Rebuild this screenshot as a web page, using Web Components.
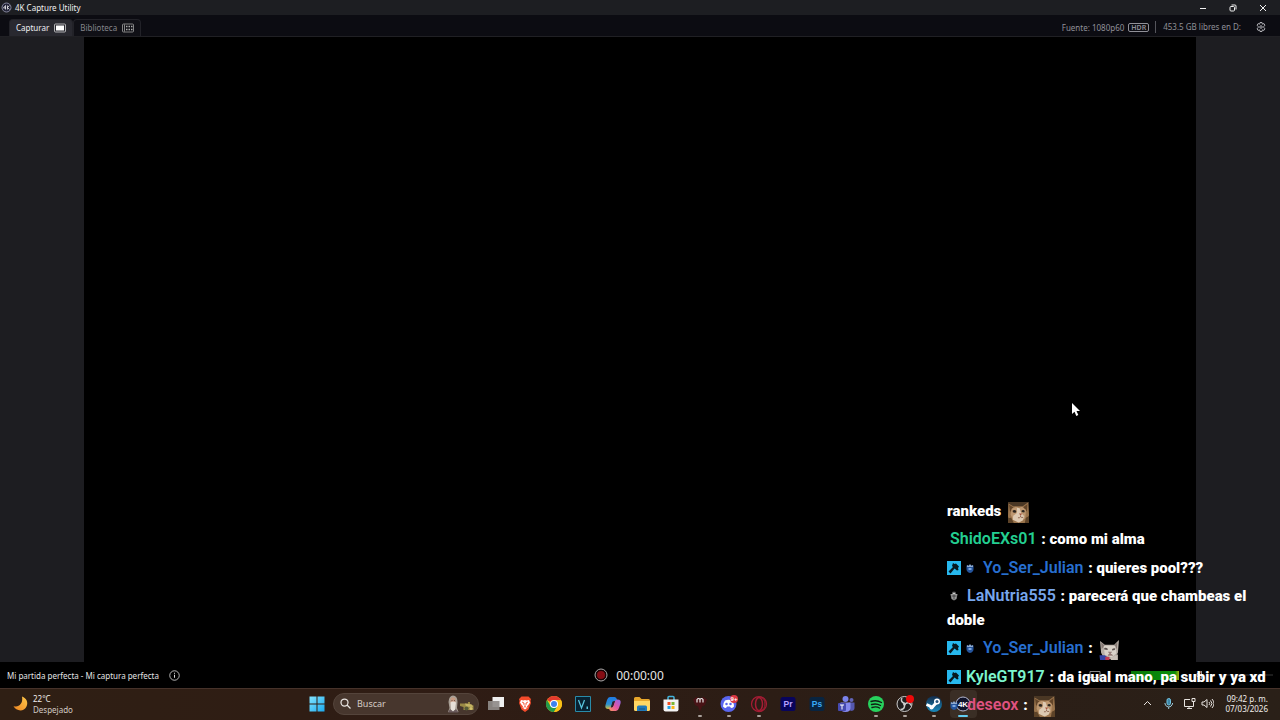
<!DOCTYPE html>
<html lang="es">
<head>
<meta charset="utf-8">
<meta name="viewport" content="width=device-width, initial-scale=1">
<title>4K Capture Utility</title>
<style>
    html, body {
        height: 100%;
        margin: 0;
        background: #000;
        overflow: hidden;
    }
    body {
        font-family: "Noto Sans", "Open Sans", sans-serif;
        font-size: 8px;
        color: #d8d8da;
    }
</style>
</head>
<body>
<capture-app></capture-app>

<script>
class CaptureTitlebar extends HTMLElement {
    constructor() {
        super();
        this.attachShadow({ mode: 'open' });
        this.shadowRoot.innerHTML = `
            <style>
                :host {
                    display: flex;
                    align-items: center;
                    height: 15px;
                    padding: 0 2px 0 1px;
                    background: #1d1e22;
                    color: #f0f0f0;
                }
                .logo { width: 11px; height: 11px; margin-right: 3px; }
                .name { flex: 1; line-height: 14px; }
                button {
                    display: grid;
                    place-items: center;
                    width: 30px;
                    height: 14px;
                    padding: 0;
                    border: 0;
                    background: none;
                    color: inherit;
                }
                button svg { width: 8px; height: 8px; fill: none; stroke: currentColor; }
            </style>
            <svg class="logo" viewBox="0 0 22 22" aria-hidden="true">
                <circle cx="11" cy="11" r="9" fill="#25263a" stroke="#85869c" stroke-width="2"/>
                <path d="M9 7v8M9 7l-4 5h5M13 7v8M17 7l-4 4 4 4" fill="none" stroke="#fff" stroke-width="1.400"/>
            </svg>
            <span class="name"><slot></slot></span>
            <button aria-label="Minimizar"><svg viewBox="0 0 8 8"><path d="M1 4.500h6"/></svg></button>
            <button aria-label="Restaurar"><svg viewBox="0 0 8 8"><rect x="1" y="2.500" width="4.500" height="4.500" rx="1"/><path d="M2.500 1h3.500q1 0 1 1v3.500"/></svg></button>
            <button aria-label="Cerrar"><svg viewBox="0 0 8 8"><path d="M1 1l6 6M7 1l-6 6"/></svg></button>
        `;
    }
}

class CaptureTabs extends HTMLElement {
    constructor() {
        super();
        this.attachShadow({ mode: 'open' });
        this.shadowRoot.innerHTML = `
            <style>
                :host {
                    display: flex;
                    align-items: flex-end;
                    justify-content: space-between;
                    height: 21px;
                    padding: 0 14px 0 9px;
                    border-bottom: 1px solid #202024;
                    background: #0c0c12;
                    color: #909098;
                }
                nav, .status { display: flex; align-items: center; }
                .status { height: 18px; }
                nav button {
                    display: flex;
                    align-items: center;
                    gap: 5px;
                    box-sizing: border-box;
                    height: 17px;
                    padding: 0 6px 1px;
                    border: 1px solid #222228;
                    border-bottom: 0;
                    border-radius: 4px 4px 0 0;
                    background: #101016;
                    color: #85858b;
                    font: inherit;
                }
                nav button.active { background: #292930; color: #f0f0f2; }
                nav svg { width: 12px; height: 10px; }
                .hdr {
                    margin-left: 4px;
                    padding: 0 2px;
                    border: 1px solid #909098;
                    border-radius: 2px;
                    font-size: 7px;
                    font-weight: 600;
                    line-height: 7px;
                }
                .disk { margin-left: 6px; padding-left: 7px; border-left: 1px solid #55555c; line-height: 12px; }
                .gear {
                    display: grid;
                    width: 10px;
                    height: 10px;
                    margin-left: 15px;
                    padding: 0;
                    border: 0;
                    background: none;
                    color: #c8c8cc;
                }
            </style>
            <nav>
                <button class="active">Capturar
                    <svg viewBox="0 0 24 20"><rect x="1" y="2" width="22" height="16" rx="2" fill="none" stroke="#ddd" stroke-width="1.500"/><rect x="4" y="5" width="16" height="10" fill="#fff"/></svg>
                </button>
                <button>Biblioteca
                    <svg viewBox="0 0 24 20" fill="none" stroke="#aaa" stroke-width="1.500"><rect x="1" y="2" width="22" height="16" rx="2"/><path d="M5 3v14"/><path d="M8 7h3M13 7h3M18 7h3M8 13h3M13 13h3M18 13h3" stroke-width="3"/></svg>
                </button>
            </nav>
            <div class="status">
                <span>Fuente: 1080p60</span>
                <span class="hdr">HDR</span>
                <span class="disk">453.5 GB libres en D:</span>
                <button class="gear" aria-label="Ajustes">
                    <svg viewBox="0 0 20 20" fill="none" stroke="currentColor" stroke-width="1.700"><path d="M8 1h4l.7 3.300 3.200-1.100 2 3.500L15.400 9v2l2.500 2.300-2 3.500-3.200-1.100L12 19H8l-.7-3.300-3.200 1.100-2-3.500L4.600 11V9L2.100 6.700l2-3.500 3.200 1.100z"/><circle cx="10" cy="10" r="2.500"/></svg>
                </button>
            </div>
        `;
    }
}

class VideoStage extends HTMLElement {
    constructor() {
        super();
        this.attachShadow({ mode: 'open' });
        this.shadowRoot.innerHTML = `
            <style>
                :host {
                    display: flex;
                    justify-content: center;
                    min-height: 0;
                    background: #1d1d21;
                }
                .video { height: 100%; aspect-ratio: 16 / 9; background: #000; }
            </style>
            <div class="video"></div>
        `;
    }
}

class RecordBar extends HTMLElement {
    constructor() {
        super();
        this.attachShadow({ mode: 'open' });
        this.shadowRoot.innerHTML = `
            <style>
                :host {
                    display: grid;
                    grid-template-columns: 1fr auto 1fr;
                    align-items: center;
                    height: 26px;
                    padding: 0 7px;
                    background: #000;
                    color: #e4e4e4;
                }
                div { display: flex; align-items: center; }
                button { display: grid; padding: 0; border: 0; background: none; }
                .title { gap: 10px; }
                .title svg { width: 11px; height: 11px; }
                .timer { gap: 8px; padding-right: 22px; font-size: 12px; }
                .timer svg { width: 14px; height: 14px; }
                .audio { justify-content: flex-end; gap: 14px; }
                .audio svg { width: 12px; height: 10px; }
                .audio .output { margin-right: 16px; }
                .level {
                    width: 48px;
                    height: 9px;
                    background: linear-gradient(90deg, #087808, #0a8f0a 92%, #a8b010);
                }
                input {
                    appearance: none;
                    width: 54px;
                    height: 2px;
                    margin: 0;
                    background: #1c1c1c;
                }
                input::-webkit-slider-thumb { appearance: none; width: 2px; height: 2px; background: #1c1c1c; }
            </style>
            <div class="title">
                <span>Mi partida perfecta - Mi captura perfecta</span>
                <button aria-label="Información"><svg viewBox="0 0 22 22" fill="none" stroke="#ddd" stroke-width="1.600"><circle cx="11" cy="11" r="9.500"/><path d="M11 9.500v6M11 5.500v2" stroke-width="2"/></svg></button>
            </div>
            <div class="timer">
                <button aria-label="Grabar"><svg viewBox="0 0 28 28"><circle cx="14" cy="14" r="12" fill="#180405" stroke="#aaa" stroke-width="2"/><circle cx="14" cy="14" r="8" fill="#850d14"/></svg></button>
                <span>00:00:00</span>
            </div>
            <div class="audio">
                <svg class="output" viewBox="0 0 24 20" fill="none" stroke="#888" stroke-width="2" aria-hidden="true"><path d="M2 3h20v12H2zM8 19h8"/></svg>
                <div class="level" role="meter" aria-label="Nivel de audio" aria-valuemin="0" aria-valuemax="100" aria-valuenow="100"></div>
                <svg viewBox="0 0 24 20" fill="none" stroke="#999" stroke-width="2" aria-hidden="true"><path d="M8 7h4l5-5v16l-5-5H8z"/></svg>
                <input type="range" value="50" aria-label="Volumen">
            </div>
        `;
    }
}

class TaskIcon extends HTMLElement {
    constructor() {
        super();
        this.attachShadow({ mode: 'open' });
        this.shadowRoot.innerHTML = `
            <style>
                :host { display: grid; justify-items: center; }
                button {
                    display: grid;
                    place-items: center;
                    position: relative;
                    width: 27px;
                    height: 28px;
                    padding: 0;
                    border: 0;
                    border-radius: 4px;
                    background: none;
                }
                :host([active]) button { background: #3a2e25; }
                :host([running]) button::after, :host([active]) button::after {
                    content: "";
                    position: absolute;
                    bottom: 1px;
                    width: 4px;
                    height: 2px;
                    border-radius: 1px;
                    background: #aaa19b;
                }
                :host([active]) button::after { width: 10px; background: #62cdf2; }
                ::slotted(svg) { display: block; width: 18px; height: 18px; }
            </style>
            <button><slot></slot></button>
        `;
    }

    connectedCallback() {
        this.shadowRoot.querySelector('button').setAttribute('aria-label', this.getAttribute('label'));
    }
}

class TaskBar extends HTMLElement {
    constructor() {
        super();
        this.attachShadow({ mode: 'open' });
        this.shadowRoot.innerHTML = `
            <style>
                :host {
                    display: grid;
                    grid-template-columns: 1fr auto 1fr;
                    align-items: center;
                    box-sizing: border-box;
                    height: 32px;
                    padding: 0 12px 2px;
                    border-top: 1px solid #46322a;
                    background: linear-gradient(90deg, #2f1f14, #2f1c14 35%, #2c1d15 60%, #2a2018);
                    color: #f0eeec;
                }
                .weather, .tray, .apps { display: flex; align-items: center; }
                .weather { gap: 4px; line-height: 11px; }
                .weather > svg { width: 17px; height: 17px; }
                .weather span { display: block; }
                .weather .sky { color: #d2cac4; }
                .search {
                    display: flex;
                    align-items: center;
                    box-sizing: border-box;
                    width: 146px;
                    height: 22px;
                    margin: 0 2px;
                    padding: 0 3px 0 6px;
                    border: 1px solid #54443b;
                    border-radius: 11px;
                    background: #47362d;
                }
                .search input {
                    flex: 1;
                    min-width: 0;
                    padding: 0 6px;
                    border: 0;
                    outline: 0;
                    background: none;
                    color: inherit;
                    font: inherit;
                    font-size: 9px;
                }
                .search input::placeholder { color: #d5ccc6; }
                .glass { width: 11px; height: 11px; }
                .figures { width: 28px; height: 18px; }
                .pins { display: grid; grid-template-columns: repeat(17, 1fr); width: 497px; }
                .start { width: 29px; }
                .tray { justify-content: flex-end; gap: 5px; }
                .tray button { display: grid; padding: 0; border: 0; background: none; }
                .tray svg { width: 13px; height: 13px; fill: none; stroke: #e8e4e0; stroke-width: 1; }
                .tray .mic { margin: 0 3px; }
                time { margin-left: 6px; text-align: right; line-height: 10px; }
                time span { display: block; }
            </style>
            <div class="weather">
                <svg viewBox="0 0 34 34" aria-hidden="true">
                    <defs><linearGradient id="moon" x1="1" y1="0" x2="0" y2="1"><stop offset="0" stop-color="#ffc94a"/><stop offset="1" stop-color="#ee8421"/></linearGradient></defs>
                    <path d="M20 3c9 3 13 12 9 20C24 34 8 33 3 22c9 4 20-4 17-19z" fill="url(#moon)"/>
                </svg>
                <div><span>22°C</span><span class="sky">Despejado</span></div>
            </div>
            <div class="apps">
                <task-icon class="start" label="Inicio"><svg viewBox="0 0 36 36"><defs><linearGradient id="win" x1="0" y1="0" x2="1" y2="1"><stop offset="0" stop-color="#83e4ff"/><stop offset="1" stop-color="#1ba9ed"/></linearGradient></defs><path d="M3 3h14v14H3zM19 3h14v14H19zM3 19h14v14H3zM19 19h14v14H19z" fill="url(#win)"/></svg></task-icon>
                <div class="search">
                    <svg class="glass" viewBox="0 0 22 22" fill="none" stroke="#e8e4e0" stroke-width="2.500" aria-hidden="true"><circle cx="9" cy="9" r="7"/><path d="M14 14l7 7"/></svg>
                    <input type="search" placeholder="Buscar" aria-label="Buscar">
                    <svg class="figures" viewBox="0 0 56 36" aria-hidden="true">
                        <path d="M3 14Q4 1 12 1q9 0 9 13l-1 12 3 8H2l3-8z" fill="#a9a096"/>
                        <path d="M7 7q5-5 10 0v11q-5 5-10 0z" fill="#c69a82"/><path d="M7 15q5-4 11 0l-2 14-4 4-4-4z" fill="#e6e0d8"/>
                        <path d="M9 11h2M14 11h2" stroke="#584037" stroke-width="1.500"/>
                        <path d="M2 35l4-7 6 5 6-5 5 7z" fill="#6a5a5c"/>
                        <path d="M26 17h16v-3h4v4l7 3v9H33v-6l-7-2z" fill="#9a8a45"/><path d="M36 17l13 2 3 5-14-1z" fill="#c5b565"/><circle cx="39" cy="27" r="4" fill="#565b38"/><circle cx="48" cy="27" r="3" fill="#d2c06c"/>
                    </svg>
                </div>
                <div class="pins">
                    <task-icon label="Vista de tareas"><svg viewBox="0 0 36 36"><path d="M11 4h23v20H11z" fill="#efefef"/><path d="M2 12h23v18H2z" fill="#8f8b89" opacity=".92"/></svg></task-icon>
                    <task-icon label="Brave"><svg viewBox="0 0 36 36"><path d="M11 3h14l5 5-1 4 1 4-5 13-7 5-7-5-5-13 1-4-1-4z" fill="#f34b2b"/><path d="M10 10l5 1 3-1 3 1 5-1 2 5-4 6-2 1 1 3-5 4-5-4 1-3-2-1-4-6z" fill="#fff"/><path d="M12 14l4 2-1 3M24 14l-4 2 1 3M18 17v6l-3 2M18 23l3 2" fill="none" stroke="#f34b2b" stroke-width="1.700"/></svg></task-icon>
                    <task-icon label="Chrome"><svg viewBox="0 0 36 36"><circle cx="18" cy="18" r="16" fill="#fbc116"/><path d="M18 18L4.100 10A16 16 0 0 1 31.900 10H18z" fill="#e33b2e"/><path d="M4.100 10A16 16 0 0 0 18 34l7-12-7-4-7 4z" fill="#229a4b"/><path d="M18 10h13.900A16 16 0 0 1 18 34l7-12z" fill="#fbc116"/><circle cx="18" cy="18" r="8" fill="#fff"/><circle cx="18" cy="18" r="6" fill="#3c82ed"/></svg></task-icon>
                    <task-icon label="Vegas"><svg viewBox="0 0 36 36"><path d="M3 3h30v30H3z" fill="#082232" stroke="#298ba9" stroke-width="2"/><path d="M9 10l6 16 6-16" fill="none" stroke="#5ac6df" stroke-width="2.500"/><path d="M25 23h3v5h-3z" fill="#5ac6df"/></svg></task-icon>
                    <task-icon label="Copilot"><svg viewBox="0 0 36 36"><defs><linearGradient id="cp1" x1="0" y1="0" x2="0" y2="1"><stop offset="0" stop-color="#1f7be5"/><stop offset=".6" stop-color="#2a8fd0"/><stop offset="1" stop-color="#d2c33b"/></linearGradient><linearGradient id="cp2" x1="1" y1="0" x2="0" y2="1"><stop offset="0" stop-color="#8a68ea"/><stop offset=".5" stop-color="#e255a7"/><stop offset="1" stop-color="#ff9a56"/></linearGradient></defs><path d="M12 4h9q4 0 5 5l1 3h-6q-3 0-4 4l-3 9q-1 3-5 3-8 0-6-8l3-10q2-6 6-6z" fill="url(#cp1)"/><path d="M24 32h-9q-4 0-5-5l-1-2h6q3 0 4-4l3-9q1-3 5-3 8 0 6 8l-3 9q-2 6-6 6z" fill="url(#cp2)"/><path d="M17 13h4l-4 11h-3z" fill="#2d2130"/></svg></task-icon>
                    <task-icon label="Explorador de archivos"><svg viewBox="0 0 36 36"><path d="M2 7q0-3 3-3h8l4 4h14q3 0 3 3v18H2z" fill="#e9a72b"/><path d="M2 12h32v17q0 3-3 3H5q-3 0-3-3z" fill="#ffd764"/><path d="M8 32v-8q0-3 3-3h14q3 0 3 3v8z" fill="#2079b9"/><path d="M12 27h12v2H12z" fill="#155582"/></svg></task-icon>
                    <task-icon label="Microsoft Store"><svg viewBox="0 0 36 36"><path d="M12 11V5q0-2 2-2h8q2 0 2 2v6" fill="none" stroke="#43b4dc" stroke-width="3"/><path d="M3 9h30v20q0 4-4 4H7q-4 0-4-4z" fill="#f4f4f4"/><path d="M11 14h6v6h-6z" fill="#f15124"/><path d="M19 14h6v6h-6z" fill="#7bb733"/><path d="M11 22h6v6h-6z" fill="#26a4e5"/><path d="M19 22h6v6h-6z" fill="#fbb516"/></svg></task-icon>
                    <task-icon label="Medal" running><svg viewBox="0 0 36 36"><path d="M4 9l7-5 7 3 7-3 7 5-4 11-6 3-4 10-4-10-6-3z" fill="#481316"/><path d="M12 15V9q3-4 6 0v6m0-6q3-4 6 0v6" fill="none" stroke="#eee" stroke-width="2.300"/></svg></task-icon>
                    <task-icon label="Discord" running><svg viewBox="0 0 36 36"><circle cx="17" cy="18" r="16" fill="#5965ee"/><path d="M10 11q7-3 14 0 4 6 4 12-3 3-6 3l-2-3h-6l-2 3q-3 0-6-3 0-7 4-12z" fill="#fff"/><circle cx="13" cy="18" r="2.500" fill="#5965ee"/><circle cx="21" cy="18" r="2.500" fill="#5965ee"/><circle cx="28" cy="8" r="8" fill="#dc3844"/><text x="28" y="12" fill="#fff" font-size="12" font-weight="600" text-anchor="middle">9+</text></svg></task-icon>
                    <task-icon label="Opera" running><svg viewBox="0 0 36 36" fill="none" stroke="#a51c34"><circle cx="18" cy="18" r="15" stroke-width="2.500"/><ellipse cx="18" cy="18" rx="7" ry="13" stroke-width="3"/><path d="M21 3q9 5 9 15t-9 15" stroke-width="2"/></svg></task-icon>
                    <task-icon label="Premiere Pro"><svg viewBox="0 0 36 36"><rect x="3" y="4" width="30" height="28" rx="5" fill="#08045c"/><text x="18" y="24" fill="#b4a1ff" font-size="17" font-weight="600" text-anchor="middle">Pr</text></svg></task-icon>
                    <task-icon label="Photoshop"><svg viewBox="0 0 36 36"><rect x="3" y="4" width="30" height="28" rx="5" fill="#082440"/><text x="18" y="24" fill="#39a9f5" font-size="17" font-weight="600" text-anchor="middle">Ps</text></svg></task-icon>
                    <task-icon label="Teams"><svg viewBox="0 0 36 36"><circle cx="17" cy="8" r="6" fill="#7b83eb"/><circle cx="29" cy="10" r="4" fill="#6264b7"/><path d="M23 15h12v11q0 6-8 6z" fill="#5558af"/><path d="M7 15h20v11q0 8-10 8T7 26z" fill="#8589ed"/><rect x="2" y="16" width="16" height="16" rx="2" fill="#464ab0"/><path d="M6 20h8M10 20v9" stroke="#fff" stroke-width="2"/></svg></task-icon>
                    <task-icon label="Spotify" running><svg viewBox="0 0 36 36"><circle cx="18" cy="18" r="16" fill="#27d15d"/><path d="M8 13q11-4 21 2M9 19q10-3 18 2M10 25q9-3 15 1" fill="none" stroke="#101b13" stroke-width="2.800" stroke-linecap="round"/></svg></task-icon>
                    <task-icon label="OBS Studio" running><svg viewBox="0 0 36 36"><circle cx="17" cy="18" r="15" fill="#211d1d" stroke="#ccc" stroke-width="2"/><path d="M17 17Q8 13 12 6M18 18q9-6 12 3M17 19q1 10-8 10" fill="none" stroke="#ccc" stroke-width="3"/><circle cx="17" cy="18" r="3" fill="#ccc"/><circle cx="28" cy="8" r="8" fill="#ef0909"/></svg></task-icon>
                    <task-icon label="Steam" running><svg viewBox="0 0 36 36"><defs><linearGradient id="st" x1="0" y1="0" x2="0" y2="1"><stop offset="0" stop-color="#132b4a"/><stop offset="1" stop-color="#198bbe"/></linearGradient></defs><circle cx="18" cy="18" r="16" fill="url(#st)"/><path d="M3 19l9 4M14 25l9-10" stroke="#fff" stroke-width="6"/><circle cx="24" cy="13" r="6" fill="#fff"/><circle cx="24" cy="13" r="3" fill="#28577e"/><circle cx="13" cy="25" r="4" fill="#fff"/></svg></task-icon>
                    <task-icon label="4K Capture Utility" active><svg viewBox="0 0 36 36"><circle cx="18" cy="18" r="14" fill="#10132a" stroke="#b4b8cf" stroke-width="2"/><text x="18" y="24" fill="#fff" font-size="16" font-weight="700" text-anchor="middle">4K</text></svg></task-icon>
                </div>
            </div>
            <div class="tray">
                <button aria-label="Iconos ocultos"><svg viewBox="0 0 13 13"><path d="M3 8l3.500-3.500L10 8"/></svg></button>
                <button class="mic" aria-label="Micrófono"><svg viewBox="0 0 13 13"><rect x="5" y="1.500" width="3.500" height="6.500" rx="1.700" fill="#3d87a8" stroke="#72c6e5"/><path d="M3 6v1q1 3 3.700 3T10.500 7V6M6.700 10v2" stroke="#9cc8d8"/></svg></button>
                <button aria-label="Red"><svg viewBox="0 0 13 13"><path d="M7 2.500H1.500v7h9V7M4 11.500h5M6 9.500v2M9 1.500h3v3H9zM10.500 4.500v3"/></svg></button>
                <button aria-label="Volumen del sistema"><svg viewBox="0 0 13 13"><path d="M1 5h2l3-2.500v8L3 8H1zM8 5q1.500 1.500 0 3M9.500 3.500q3 3 0 6M11 2q4 4.500 0 9"/></svg></button>
                <time datetime="2026-03-07T21:42"><span>09:42 p. m.</span><span>07/03/2026</span></time>
            </div>
        `;
    }
}

class ChatBadge extends HTMLElement {
    constructor() {
        super();
        this.attachShadow({ mode: 'open' });
    }

    connectedCallback() {
        const art = {
            mod: `<rect width="28" height="28" fill="#27b8ee"/><path d="M12 4l3 2 3-1 6 6-2 3 1 4-3 1-5-4L7 25l-4-4 9-9-2-2z" fill="#071820"/>`,
            blue: `<path d="M7 9h14v7q0 6-7 8-7-2-7-8z" fill="#24549c"/><path d="M8 8l3 2 3-4 3 4 3-2v4H8z" fill="#8fa9cc"/><path d="M11 14h6v4h-6z" fill="#7da6dd"/>`,
            gray: `<path d="M7 10h14l-2 10-5 3-5-3z" fill="#999"/><path d="M10 7l4-2 4 2M9 14h10M14 11v10" stroke="#303030" stroke-width="1.500"/><path d="M11 7h6v3h-6z" fill="#ccc"/>`
        };
        this.shadowRoot.innerHTML = `
            <style>
                :host { display: inline-block; width: 14px; height: 14px; margin-right: 2px; vertical-align: -2px; }
                :host(:not([kind="mod"])) { margin-right: 3px; }
                svg { display: block; width: 100%; height: 100%; }
            </style>
            <svg viewBox="0 0 28 28" aria-hidden="true">${art[this.getAttribute('kind')]}</svg>
        `;
    }
}

class CatEmote extends HTMLElement {
    constructor() {
        super();
        this.attachShadow({ mode: 'open' });
    }

    connectedCallback() {
        const brown = `
            <path d="M0 0h40v40H0z" fill="#4a3724"/>
            <path d="M1 3l9 5h18l10-7 2 24-5 15H3L0 27z" fill="#9a744c"/>
            <path d="M2 5l8 5-6 9zM37 4l-8 6 7 8z" fill="#634529"/>
            <path d="M7 13l8-4 6 2 6-2 7 6-1 16-11 8-13-6-4-9z" fill="#bd9770"/>
            <path d="M17 11l5 1 3 9 6 6-3 8-8 4-11-5 1-8 7-5z" fill="#decab2"/>
            <path d="M9 16q4-2 7 1l-1 3q-4 1-6-1zM26 16q4-2 6 1l-1 3-5-1z" fill="#2b241d"/>
            <path d="M21 22h6l-3 4z" fill="#a5523c"/><path d="M24 26v2q-2 3-5 2M24 28q2 3 5 1" fill="none" stroke="#80523d" stroke-width="1.500"/>
            <path d="M0 31l6-1 5 10H0zM34 30l6-3v13h-8z" fill="#5d4328"/>`;
        const white = `
            <path d="M2 4l9 7h18l9-9-2 24-7 12H10L4 26z" fill="#b8afa7"/>
            <path d="M4 6l7 7-6 6zM35 6l-6 7 5 6z" fill="#857873"/>
            <path d="M9 13h22l2 14-9 8-13-5z" fill="#d9d2c9"/>
            <path d="M10 17q4-1 7 2l-1 2-6-1zM25 19q3-2 6-1l-1 3-5 1z" fill="#5a504d"/>
            <path d="M18 25h6l-3 3zM21 28l-4 3h9z" fill="#a27a76" stroke="#77605c"/>
            <path d="M1 31h10l6 4v5H2z" fill="#3443a7"/><path d="M12 34h8v6h-8z" fill="#c33a52"/>
            <path d="M23 36l13-7v11H22z" fill="#c8bfb6"/>`;
        this.shadowRoot.innerHTML = `
            <style>
                :host { display: inline-block; width: 21px; height: 21px; margin: -2px 0 -2px 3px; vertical-align: -5px; }
                svg { display: block; width: 100%; height: 100%; }
            </style>
            <svg viewBox="0 0 40 40" role="img" aria-label="gato">${this.getAttribute('kind') === 'white' ? white : brown}</svg>
        `;
    }
}

class ChatLine extends HTMLElement {
    constructor() {
        super();
        this.attachShadow({ mode: 'open' });
        this.shadowRoot.innerHTML = `
            <style>
                :host { display: block; color: #fff; }
                .user { margin: 0 1px 0 3px; font-size: 16px; font-weight: 600; }
            </style>
            <slot name="badges"></slot><span class="user"></span> <slot></slot>
        `;
    }

    connectedCallback() {
        const user = this.shadowRoot.querySelector('.user');
        if (!this.hasAttribute('user')) {
            user.remove();
            return;
        }
        user.textContent = this.getAttribute('user');
        user.style.color = this.getAttribute('color');
    }
}

class ChatOverlay extends HTMLElement {
    constructor() {
        super();
        this.attachShadow({ mode: 'open' });
        this.shadowRoot.innerHTML = `
            <style>
                :host {
                    display: grid;
                    align-content: space-between;
                    width: 328px;
                    height: 218px;
                    font-family: Roboto, sans-serif;
                    font-size: 15px;
                    font-weight: 900;
                    line-height: 24px;
                }
                chat-line { height: 24px; }
                chat-line.long { height: auto; }
            </style>
            <chat-line>rankeds <cat-emote></cat-emote></chat-line>
            <chat-line user="ShidoEXs01" color="#23cf91">: como mi alma</chat-line>
            <chat-line user="Yo_Ser_Julian" color="#276fd0"><chat-badge slot="badges" kind="mod"></chat-badge><chat-badge slot="badges" kind="blue"></chat-badge>: quieres pool???</chat-line>
            <chat-line class="long" user="LaNutria555" color="#78a7ed"><chat-badge slot="badges" kind="gray"></chat-badge>: parecerá que chambeas el doble</chat-line>
            <chat-line user="Yo_Ser_Julian" color="#276fd0"><chat-badge slot="badges" kind="mod"></chat-badge><chat-badge slot="badges" kind="blue"></chat-badge>: <cat-emote kind="white"></cat-emote></chat-line>
            <chat-line user="KyleGT917" color="#7cf5cd"><chat-badge slot="badges" kind="mod"></chat-badge>: da igual mano, pa subir y ya xd</chat-line>
            <chat-line user="deseox" color="#df5280"><chat-badge slot="badges" kind="blue"></chat-badge>: <cat-emote></cat-emote></chat-line>
        `;
    }
}

class CaptureApp extends HTMLElement {
    constructor() {
        super();
        this.attachShadow({ mode: 'open' });
        this.shadowRoot.innerHTML = `
            <style>
                :host {
                    display: grid;
                    grid-template-rows: auto auto 1fr auto auto;
                    position: relative;
                    height: 100vh;
                }
                chat-overlay { position: absolute; right: 5px; bottom: 3px; }
                .cursor { position: absolute; left: 83.750%; top: 56%; width: 9px; height: 14px; }
            </style>
            <capture-titlebar>4K Capture Utility</capture-titlebar>
            <capture-tabs></capture-tabs>
            <video-stage></video-stage>
            <record-bar></record-bar>
            <task-bar></task-bar>
            <chat-overlay></chat-overlay>
            <svg class="cursor" viewBox="0 0 9 14" aria-hidden="true"><path d="M0 0v11l2.500-2.300L4.300 13l2-.9L4.500 8H8z" fill="#fff"/></svg>
        `;
    }
}

customElements.define('capture-titlebar', CaptureTitlebar);
customElements.define('capture-tabs', CaptureTabs);
customElements.define('video-stage', VideoStage);
customElements.define('record-bar', RecordBar);
customElements.define('task-icon', TaskIcon);
customElements.define('task-bar', TaskBar);
customElements.define('chat-badge', ChatBadge);
customElements.define('cat-emote', CatEmote);
customElements.define('chat-line', ChatLine);
customElements.define('chat-overlay', ChatOverlay);
customElements.define('capture-app', CaptureApp);
</script>
</body>
</html>
